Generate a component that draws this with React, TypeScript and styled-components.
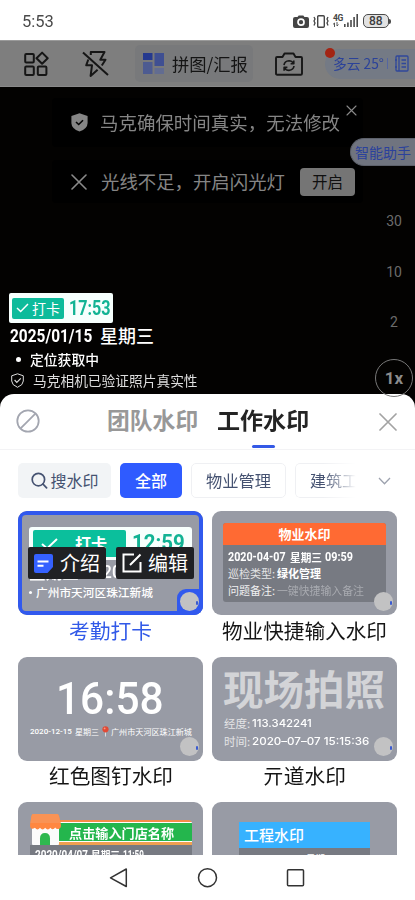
import React, { useLayoutEffect, useRef, useState } from 'react';
import styled, { createGlobalStyle, css } from 'styled-components';

const sans = '"Noto Sans CJK SC", sans-serif';
const roboto = 'Roboto, "Noto Sans CJK SC", sans-serif';
const inter = 'Inter, "Noto Sans CJK SC", sans-serif';

const GlobalStyle = createGlobalStyle`
  * { box-sizing: border-box; }
  body { margin: 0; background: #fff; font-family: ${sans}; overflow: hidden; }
  svg { display: block; flex: none; }
`;

/* ---------- text fitted to a given width ---------- */

const FitBox = styled.span<{ $w: number; $ml: number }>`
  display: block;
  flex: none;
  width: ${(p) => p.$w}px;
  margin-left: ${(p) => p.$ml}px;
  font-size: 0;
  line-height: 0;
`;

const FitInner = styled.span<{ $size: number; $color: string; $weight: number; $font: string }>`
  display: inline-block;
  vertical-align: top;
  white-space: nowrap;
  transform-origin: 0 50%;
  font: ${(p) => p.$weight} ${(p) => p.$size}px/1.2 ${(p) => p.$font};
  color: ${(p) => p.$color};
`;

type FitProps = {
  w: number;
  size: number;
  color?: string;
  weight?: number;
  font?: string;
  ml?: number;
  children: React.ReactNode;
};

function Fit({ w, size, color = '#fff', weight = 400, font = sans, ml = 0, children }: FitProps) {
  const ref = useRef<HTMLSpanElement>(null);
  const [scale, setScale] = useState(1);
  useLayoutEffect(() => {
    if (ref.current) setScale(w / ref.current.offsetWidth);
  }, [w]);
  return (
    <FitBox $w={w} $ml={ml}>
      <FitInner
        ref={ref}
        $size={size}
        $color={color}
        $weight={weight}
        $font={font}
        style={{ transform: `scaleX(${scale})` }}
      >
        {children}
      </FitInner>
    </FitBox>
  );
}

const Line = styled.div<{ $h: number; $mt?: number; $pl?: number }>`
  display: flex;
  align-items: center;
  flex: none;
  height: ${(p) => p.$h}px;
  margin-top: ${(p) => p.$mt ?? 0}px;
  padding-left: ${(p) => p.$pl ?? 0}px;
`;

/* ---------- screen ---------- */

const Screen = styled.div`
  display: flex;
  flex-direction: column;
  width: 415px;
  height: 900px;
  background: #030201;
  overflow: hidden;
`;

const StatusBar = styled.header`
  display: flex;
  align-items: center;
  height: 40px;
  flex: none;
  padding: 2px 24px 0 22px;
  background: #fff;
`;

const StatusIcons = styled.div`
  display: flex;
  align-items: center;
  margin-left: auto;
`;

const Battery = styled.div`
  display: flex;
  align-items: center;
  margin-left: 4px;
`;

const BatteryBody = styled.div`
  display: flex;
  align-items: center;
  justify-content: center;
  width: 26px;
  height: 14px;
  border: 1.3px solid #4a4a4a;
  border-radius: 5px;
  background: #e2e2e2;
`;

const BatteryTip = styled.div`
  width: 2px;
  height: 5px;
  border-radius: 0 2px 2px 0;
  background: #4a4a4a;
`;

const Toolbar = styled.nav`
  display: flex;
  align-items: center;
  height: 47px;
  flex: none;
  padding: 0 0 0 24px;
  background: #7e7e7e;
  border-top: 1px solid #9a9a9a;
  border-bottom: 1px solid #8a8a8a;
`;

const PuzzleButton = styled.div`
  display: flex;
  align-items: center;
  width: 118px;
  height: 37px;
  margin-left: 26px;
  padding-left: 8px;
  border-radius: 5px;
  background: #78797b;
`;

const WeatherPill = styled.div`
  position: relative;
  display: flex;
  align-items: center;
  width: 90px;
  height: 30px;
  margin-left: 22px;
  padding-left: 8px;
  border-radius: 15px 0 0 15px;
  background: #747a85;
`;

const RedDot = styled.i`
  position: absolute;
  left: 0;
  top: -1px;
  width: 10px;
  height: 10px;
  border-radius: 50%;
  background: #a32413;
`;

const Divider = styled.i`
  width: 1px;
  height: 11px;
  margin: 0 7px 0 3px;
  background: #5566a0;
`;

const Camera = styled.main`
  position: relative;
  display: flex;
  flex-direction: column;
  height: 307px;
  flex: none;
`;

const Notice = styled.div<{ $h: number; $mt: number }>`
  display: flex;
  align-items: center;
  width: 311px;
  height: ${(p) => p.$h}px;
  margin: ${(p) => p.$mt}px 0 0 52px;
  padding-left: 19px;
  border-radius: 4px;
  background: #000;
`;

const NoticeClose = styled.div`
  align-self: flex-start;
  margin: 7px 0 0 6px;
`;

const TurnOn = styled.button`
  display: flex;
  align-items: center;
  justify-content: center;
  width: 55px;
  height: 28px;
  margin-left: 15px;
  padding: 0;
  border: 0;
  border-radius: 4px;
  background: #757575;
`;

const Assistant = styled.div`
  position: absolute;
  right: 0;
  top: 51px;
  display: flex;
  align-items: center;
  width: 65px;
  height: 28px;
  padding-left: 4px;
  border-radius: 14px 0 0 14px;
  background: #70747f;
  border: 1px solid #5d616b;
  border-right: 0;
`;

const ZoomRail = styled.div`
  position: absolute;
  right: 0;
  top: 109px;
  display: flex;
  flex-direction: column;
  align-items: center;
  width: 42px;
`;

const ZoomStep = styled.div`
  height: 50.5px;
  font: 14px/50.5px ${roboto};
  color: #6b6b6b;
`;

const ZoomCurrent = styled.div`
  flex: none;
  width: 38px;
  height: 38px;
  margin-top: 11px;
  border: 1px solid #777;
  border-radius: 50%;
  text-align: center;
  font: 700 17px/37px ${roboto};
  color: #8b8b8b;
`;

const Stamp = styled.section`
  position: absolute;
  left: 9px;
  top: 206px;
  display: flex;
  flex-direction: column;
`;

const ClockBox = styled.div`
  display: flex;
  align-items: center;
  width: 104px;
  height: 30px;
  padding-left: 3px;
  border-radius: 2px;
  background: #f6fffd;
`;

const PunchBadge = styled.div`
  display: flex;
  align-items: center;
  width: 52px;
  height: 21px;
  padding-left: 4px;
  border-radius: 2px;
  background: #0dbb9b;
`;

const Dot = styled.i<{ $size: number }>`
  flex: none;
  width: ${(p) => p.$size}px;
  height: ${(p) => p.$size}px;
  border-radius: 50%;
  background: #fff;
`;

/* ---------- sheet ---------- */

const Sheet = styled.section`
  display: flex;
  flex-direction: column;
  height: 461px;
  flex: none;
  border-radius: 14px 14px 0 0;
  background: #fff;
  overflow: hidden;
`;

const SheetHeader = styled.div`
  display: flex;
  height: 56px;
  flex: none;
  padding: 0 18px 0 16px;
  border-bottom: 1px solid #f3f3f5;
`;

const Tab = styled.div<{ $ml: number }>`
  display: flex;
  flex-direction: column;
  align-items: center;
  margin-left: ${(p) => p.$ml}px;
`;

const TabMark = styled.i`
  width: 23px;
  height: 3px;
  margin-top: 11px;
  border-radius: 2px;
  background: #3459e6;
`;

const HeaderIcon = styled.div<{ $mt: number; $ml?: string }>`
  margin: ${(p) => p.$mt}px 0 0 ${(p) => p.$ml ?? '0'};
`;

const Chips = styled.div`
  display: flex;
  height: 35px;
  flex: none;
  margin: 13px 0 0 18px;
`;

const Chip = styled.div<{ $w: number; $kind: 'search' | 'active' | 'plain' | 'cut' }>`
  display: flex;
  align-items: center;
  justify-content: center;
  width: ${(p) => p.$w}px;
  margin-right: 9px;
  border-radius: 5px;
  ${(p) => p.$kind === 'search' && css`background: #f2f4f6;`}
  ${(p) => p.$kind === 'active' && css`background: #2f5bff;`}
  ${(p) => p.$kind === 'plain' && css`border: 1px solid #eff0f3;`}
  ${(p) =>
    p.$kind === 'cut' &&
    css`
      justify-content: flex-start;
      padding-left: 14px;
      border: 1px solid #eff0f3;
      border-right: 0;
      border-radius: 5px 0 0 5px;
      mask-image: linear-gradient(to right, #000 45%, transparent 98%);
    `}
`;

const ChevronBox = styled.div`
  align-self: center;
  margin-left: 12px;
`;

const Grid = styled.div`
  display: grid;
  grid-template-columns: 185px 185px;
  grid-auto-rows: 145.5px;
  column-gap: 9px;
  margin: 13px 0 0 18px;
`;

const Item = styled.article`
  display: flex;
  flex-direction: column;
  align-items: center;
`;

const Card = styled.div<{ $selected?: boolean }>`
  position: relative;
  display: flex;
  flex-direction: column;
  width: 185px;
  height: 104px;
  flex: none;
  border-radius: 9px;
  background: #989ba5;
  overflow: hidden;
  ${(p) =>
    p.$selected &&
    css`
      &::after {
        content: '';
        position: absolute;
        inset: 0;
        border: 4px solid #3159ee;
        border-radius: 8px 8px 3px 8px;
      }
    `}
`;

const CardLabel = styled.div`
  display: flex;
  align-items: center;
  height: 28px;
  margin-top: 1px;
`;

const Corner = styled.div<{ $on?: boolean }>`
  position: absolute;
  right: 0;
  bottom: 0;
  z-index: 1;
  width: 26px;
  height: 26px;
  padding: 2.5px;
  border-radius: 9px 0 3px 0;
  background: ${(p) => (p.$on ? '#3159ee' : 'transparent')};
`;

const Knob = styled.div`
  display: flex;
  align-items: center;
  justify-content: flex-end;
  width: 19px;
  height: 19px;
  padding: 3px 1px 0 0;
  border-radius: 50%;
  background: #c2c2c3;

  &::after {
    content: '';
    width: 2px;
    height: 4px;
    border-radius: 1px;
    background: #3b5bd0;
  }
`;

const PunchBox = styled.div`
  display: flex;
  align-items: center;
  width: 163px;
  height: 33px;
  margin: 16px 0 0 11px;
  padding-left: 4px;
  border-radius: 3px;
  background: #f8fffd;
`;

const PunchGreen = styled.div`
  display: flex;
  align-items: center;
  width: 93px;
  height: 27px;
  padding-left: 8px;
  border-radius: 2px;
  background: #0bbf9c;
`;

const HoverActions = styled.div`
  position: absolute;
  left: 10px;
  top: 36px;
  z-index: 2;
  display: flex;
  gap: 10px;
`;

const Action = styled.div`
  display: flex;
  align-items: center;
  width: 78px;
  height: 32px;
  padding-left: 6px;
  border-radius: 2px;
  background: #202124;
`;

const PropertyPanel = styled.div`
  display: flex;
  flex-direction: column;
  width: 163px;
  height: 79px;
  margin: 12px 0 0 11px;
  border-radius: 3px;
  background: #777a82;
  overflow: hidden;
`;

const OrangeHead = styled.div`
  display: flex;
  align-items: center;
  justify-content: center;
  height: 22px;
  flex: none;
  background: #ff6a33;
`;

const StorePanel = styled.div`
  display: flex;
  flex-direction: column;
  width: 162px;
  height: 90px;
  margin: 18px 0 0 12px;
  background: linear-gradient(#777a82, #777a82) no-repeat 0 25px;
`;

const StoreBanner = styled.div`
  display: flex;
  align-items: center;
  height: 25px;
  flex: none;
  margin-left: 10px;
  padding-left: 29px;
  border-radius: 0 4px 0 0;
  background: linear-gradient(
    #f58b4a 0 2px, #fff 2px 3px, #24b64d 3px 21px, #fff 21px 22px, #f0a050 22px 25px
  );
`;

const StoreIcon = styled.div`
  position: absolute;
  left: 11px;
  top: 11px;
`;

const ProjectPanel = styled.div`
  width: 131px;
  height: 80px;
  margin: 20px 0 0 27px;
  background: #777a82;
`;

const BlueHead = styled.div`
  display: flex;
  align-items: center;
  height: 26px;
  padding-left: 5px;
  background: #37b2ff;
`;

const SystemNav = styled.footer`
  display: flex;
  height: 45px;
  flex: none;
  padding: 12px 0 0 109px;
  background: #fff;
`;

const NavSlot = styled.div<{ $mr: number }>`
  margin-right: ${(p) => p.$mr}px;
`;

/* ---------- icons ---------- */

const CrossIcon = ({ s, color, w }: { s: number; color: string; w: number }) => (
  <svg width={s} height={s} viewBox={`0 0 ${s} ${s}`} stroke={color} strokeWidth={w} strokeLinecap="round">
    <path d={`M1 1L${s - 1} ${s - 1}M${s - 1} 1L1 ${s - 1}`} />
  </svg>
);

const CheckIcon = ({ w, h, sw }: { w: number; h: number; sw: number }) => (
  <svg width={w} height={h} viewBox={`0 0 ${w} ${h}`} fill="none" stroke="#fff" strokeWidth={sw}>
    <path d={`M1 ${h * 0.5}L${w * 0.36} ${h - 1.5}L${w - 1} 1`} />
  </svg>
);

const AppsIcon = () => (
  <svg width="25" height="26" viewBox="0 0 25 26" fill="none" stroke="#161616" strokeWidth="2">
    <rect x="1.2" y="3" width="8.6" height="8.6" rx="1" />
    <rect x="1.2" y="15.4" width="8.6" height="8.6" rx="1" />
    <rect x="13.8" y="15.4" width="8.6" height="8.6" rx="1" />
    <path d="M18.1 1.6L23.7 7.2L18.1 12.8L12.5 7.2Z" strokeLinejoin="round" />
  </svg>
);

const FlashOffIcon = () => (
  <svg width="27" height="28" viewBox="0 0 27 28" fill="none" stroke="#161616" strokeWidth="2" strokeLinejoin="round">
    <path d="M8.8 5V2H22.5L18.3 9.8H23.5L19.8 15.5M6.3 9.5L4.2 15.3H10L8.6 26L15.6 19.8" />
    <path d="M1 2.5L26 25" />
  </svg>
);

const MosaicIcon = () => (
  <svg width="21" height="21" viewBox="0 0 21 21">
    <rect width="9.5" height="7" fill="#25398f" />
    <rect y="9" width="9.5" height="12" fill="#4d5b91" />
    <rect x="11.5" width="9.5" height="13" fill="#3f4f92" />
    <rect x="11.5" y="15" width="9.5" height="6" fill="#626c91" />
  </svg>
);

const FlipCameraIcon = () => (
  <svg width="28" height="24" viewBox="0 0 28 24" fill="none" stroke="#171717" strokeWidth="1.9" strokeLinejoin="round">
    <path d="M2 5H7.5L9.5 1.5H18.5L20.5 5H26Q27 5 27 6V21.5Q27 22.8 25.8 22.8H2.2Q1 22.8 1 21.5V6Q1 5 2 5Z" />
    <path d="M9 13.2Q9.5 9 14 8.8Q17 8.8 18.4 11.4M18.8 8.5V11.8H15.6M19 14Q18.5 18 14 18.4Q11 18.4 9.5 15.8M9.1 18.8V15.4H12.4" strokeWidth="1.6" />
  </svg>
);

const NotebookIcon = () => (
  <svg width="14" height="17" viewBox="0 0 14 17" fill="none" stroke="#2f479b" strokeWidth="1.3">
    <rect x="1" y="1" width="12" height="15" rx="1" />
    <path d="M4 1V16M6.5 5H11M6.5 8.5H11M6.5 12H11M0 5H2M0 12H2" />
  </svg>
);

const StatusCamera = () => (
  <svg width="16" height="13" viewBox="0 0 16 13">
    <path d="M2 2H4.5L5.7.4H10.3L11.5 2H14Q16 2 16 4V11Q16 13 14 13H2Q0 13 0 11V4Q0 2 2 2Z" fill="#454545" />
    <circle cx="8" cy="7.2" r="3" fill="none" stroke="#fff" strokeWidth="1.7" />
  </svg>
);

const VibrateIcon = () => (
  <svg width="16" height="13" viewBox="0 0 16 13" fill="none" stroke="#454545">
    <rect x="4.7" y=".7" width="6.6" height="11.6" rx="1" strokeWidth="1.4" />
    <path d="M1 2L2 4L1 6L2 8L1 10.5M15 2L14 4L15 6L14 8L15 10.5" strokeWidth="1.3" />
  </svg>
);

const SignalLabel = styled.div`
  display: flex;
  flex-direction: column;
  width: 11px;
  margin: -1px 0 0 4px;
  font: 700 8.5px/8px ${roboto};
  letter-spacing: -0.4px;
  color: #454545;
`;

const SignalBars = () => (
  <svg width="15" height="14" viewBox="0 0 15 14" fill="#4b4b4b">
    <path d="M0 10H1.6V13H0ZM3.1 8.5H4.7V13H3.1ZM6.2 6H7.8V13H6.2ZM9.3 3H10.9V13H9.3ZM12.4 0H14V13H12.4Z" />
  </svg>
);

const ArrowPair = () => (
  <svg width="6" height="5" viewBox="0 0 6 5" stroke="#454545" fill="none">
    <path d="M1.5 5V1L0 2.4M4 0V4L5.5 2.6" strokeWidth=".9" />
  </svg>
);

const ShieldSolid = () => (
  <svg width="17" height="19" viewBox="0 0 17 19">
    <path d="M8.5.3L16.6 3V10Q16.6 15.5 8.5 18.6Q.4 15.5.4 10V3Z" fill="#858585" />
    <path d="M5 9L7.7 11.5L12 7.3" fill="none" stroke="#050505" strokeWidth="1.6" />
  </svg>
);

const ShieldOutline = () => (
  <svg width="13" height="15" viewBox="0 0 13 15" fill="none" stroke="#ddd">
    <path d="M6.5.8L12.3 2.8V8Q12.3 12 6.5 14.3Q.7 12 .7 8V2.8Z" />
    <path d="M3.6 7L5.8 9.3L9.8 5.3" strokeWidth="1.2" />
  </svg>
);

const BanIcon = () => (
  <svg width="24" height="24" viewBox="0 0 24 24" fill="none" stroke="#a3a6b0" strokeWidth="1.8">
    <circle cx="12" cy="12" r="10.7" />
    <path d="M4.6 19.4L19.4 4.6" />
  </svg>
);

const SearchIcon = () => (
  <svg width="17" height="17" viewBox="0 0 17 17" fill="none" stroke="#455271" strokeWidth="1.7" strokeLinecap="round">
    <circle cx="7.4" cy="7.6" r="6.2" />
    <path d="M12 12.2L15.6 15.8" />
  </svg>
);

const ChevronIcon = () => (
  <svg width="13" height="8" viewBox="0 0 13 8" fill="none" stroke="#9da2ae" strokeWidth="1.3">
    <path d="M1 1L6.5 6.7L12 1" />
  </svg>
);

const IntroIcon = () => (
  <svg width="19" height="19" viewBox="0 0 19 19">
    <path d="M2 0H17Q19 0 19 2V13L13.5 19H2Q0 19 0 17V2Q0 0 2 0Z" fill="#3561ff" />
    <path d="M3.5 7.5H14.5M3.5 11.8H9.5" stroke="#fff" strokeWidth="2" />
  </svg>
);

const EditIcon = () => (
  <svg width="20" height="20" viewBox="0 0 20 20" fill="none" stroke="#fff" strokeWidth="2">
    <path d="M12 1.5H1.5V18.5H18.5V9M8 12L18.5 1.5" />
  </svg>
);

const PinIcon = () => (
  <svg width="7" height="11" viewBox="0 0 7 11">
    <path d="M3.5 6V10.5" stroke="#dcdde1" strokeWidth="1" />
    <circle cx="3.5" cy="3.3" r="3.1" fill="#e14a35" />
    <circle cx="2.6" cy="2.4" r=".9" fill="#f69a86" />
  </svg>
);

const ShopIcon = () => (
  <svg width="33" height="33" viewBox="0 0 33 33">
    <path d="M3 13H30V31Q30 32 29 32H4Q3 32 3 31Z" fill="#fbfbfb" />
    <path d="M11 32V25.5Q11 20 16 20Q21 20 21 25.5V32Z" fill="#2eb84f" />
    <path d="M4 1H28Q29.5 1 30 3L32 12Q32 16 29 16Q27 16 26.2 14.5Q24 18 21.4 14.8Q18.8 18 16.2 14.8Q13.6 18 11 14.8Q8.4 18 6 14.8Q1 17.5 1 12L2.5 3Q3 1 4 1Z" fill="#ff8740" />
    <path d="M4 1H28Q29.5 1 30 3L31.5 10H1.4L2.5 3Q3 1 4 1Z" fill="#f99355" />
  </svg>
);

/* ---------- page ---------- */

function Marker({ on }: { on?: boolean }) {
  return (
    <Corner $on={on}>
      <Knob />
    </Corner>
  );
}

function Entry({ label, w, selected, children }: { label?: string; w?: number; selected?: boolean; children: React.ReactNode }) {
  return (
    <Item>
      <Card $selected={selected}>
        {children}
        <Marker on={selected} />
      </Card>
      {label && (
        <CardLabel>
          <Fit w={w ?? 83} size={20.5} color={selected ? '#3159e8' : '#151515'}>{label}</Fit>
        </CardLabel>
      )}
    </Item>
  );
}

const teal = '#12b394';

export default function App() {
  return (
    <Screen>
      <GlobalStyle />
      <StatusBar>
        <Fit w={32} size={17} color="#4a4a4a" font={roboto}>5:53</Fit>
        <StatusIcons>
          <StatusCamera />
          <Line $h={14} $pl={4}><VibrateIcon /></Line>
          <SignalLabel>4G<ArrowPair /></SignalLabel>
          <SignalBars />
          <Battery>
            <BatteryBody>
              <Fit w={14} size={12} color="#3c3c3c" weight={500} font={roboto}>88</Fit>
            </BatteryBody>
            <BatteryTip />
          </Battery>
        </StatusIcons>
      </StatusBar>

      <Toolbar>
        <AppsIcon />
        <Line $h={28} $pl={33}><FlashOffIcon /></Line>
        <PuzzleButton>
          <MosaicIcon />
          <Fit w={76} size={17.5} color="#141414" ml={8}>拼图/汇报</Fit>
        </PuzzleButton>
        <Line $h={28} $pl={22}><FlipCameraIcon /></Line>
        <WeatherPill>
          <RedDot />
          <Fit w={51} size={14} color="#2b4299">多云 25°</Fit>
          <Divider />
          <NotebookIcon />
        </WeatherPill>
      </Toolbar>

      <Camera>
        <Notice $h={49} $mt={11}>
          <ShieldSolid />
          <Fit w={240} size={18.4} color="#858585" ml={12}>马克确保时间真实，无法修改</Fit>
          <NoticeClose><CrossIcon s={11} color="#8a8a8a" w={1.1} /></NoticeClose>
        </Notice>
        <Notice $h={43} $mt={13}>
          <CrossIcon s={16} color="#8a8a8a" w={1.6} />
          <Fit w={184} size={18.4} color="#858585" ml={14}>光线不足，开启闪光灯</Fit>
          <TurnOn><Fit w={31} size={15.5} color="#101010">开启</Fit></TurnOn>
        </Notice>
        <Assistant><Fit w={56} size={14} color="#2a419c">智能助手</Fit></Assistant>
        <ZoomRail>
          <ZoomStep>30</ZoomStep>
          <ZoomStep>10</ZoomStep>
          <ZoomStep>2</ZoomStep>
          <ZoomCurrent>1x</ZoomCurrent>
        </ZoomRail>
        <Stamp>
          <ClockBox>
            <PunchBadge>
              <CheckIcon w={13} h={10} sw={1.5} />
              <Fit w={28} size={14} ml={3}>打卡</Fit>
            </PunchBadge>
            <Fit w={42} size={20} color={teal} weight={700} font={roboto} ml={5}>17:53</Fit>
          </ClockBox>
          <Line $h={24} $mt={1}>
            <Fit w={82} size={19} weight={700} font={roboto} ml={1}>2025/01/15</Fit>
            <Fit w={54} size={18} weight={500} ml={8}>星期三</Fit>
          </Line>
          <Line $h={22} $pl={7}>
            <Dot $size={5} />
            <Fit w={69} size={14} weight={500} ml={9}>定位获取中</Fit>
          </Line>
          <Line $h={21} $pl={2}>
            <ShieldOutline />
            <Fit w={165} size={13.8} color="#dedede" ml={9}>马克相机已验证照片真实性</Fit>
          </Line>
        </Stamp>
      </Camera>

      <Sheet>
        <SheetHeader>
          <HeaderIcon $mt={15}><BanIcon /></HeaderIcon>
          <Tab $ml={67}>
            <Line $h={28} $mt={12}><Fit w={91} size={22.8} color="#989898" weight={700}>团队水印</Fit></Line>
          </Tab>
          <Tab $ml={19}>
            <Line $h={28} $mt={12}><Fit w={92} size={22.8} color="#242424" weight={700}>工作水印</Fit></Line>
            <TabMark />
          </Tab>
          <HeaderIcon $mt={19} $ml="auto"><CrossIcon s={18} color="#a3a3a3" w={1.7} /></HeaderIcon>
        </SheetHeader>

        <Chips>
          <Chip $w={93} $kind="search"><SearchIcon /><Fit w={48} size={16} color="#455271" ml={3}>搜水印</Fit></Chip>
          <Chip $w={62} $kind="active"><Fit w={32} size={16} weight={500}>全部</Fit></Chip>
          <Chip $w={95} $kind="plain"><Fit w={65} size={16} color="#455271">物业管理</Fit></Chip>
          <Chip $w={62} $kind="cut"><Fit w={48} size={16} color="#455271">建筑工</Fit></Chip>
          <ChevronBox><ChevronIcon /></ChevronBox>
        </Chips>

        <Grid>
          <Entry label="考勤打卡" w={83} selected>
            <PunchBox>
              <PunchGreen>
                <CheckIcon w={17} h={12} sw={2} />
                <Fit w={32} size={16} weight={700} ml={17}>打卡</Fit>
              </PunchGreen>
              <Fit w={53} size={22} color={teal} weight={700} font={roboto} ml={6}>12:59</Fit>
            </PunchBox>
            <Line $h={22} $mt={1} $pl={11}>
              <Fit w={50} size={17} weight={500}>星期三</Fit>
              <Fit w={37} size={19} weight={500} font={roboto} ml={5}>2020</Fit>
            </Line>
            <Line $h={18} $pl={11}>
              <Dot $size={3} />
              <Fit w={117} size={11.7} weight={500} ml={4}>广州市天河区珠江新城</Fit>
            </Line>
            <HoverActions>
              <Action><IntroIcon /><Fit w={40} size={20} ml={7}>介绍</Fit></Action>
              <Action><EditIcon /><Fit w={40} size={20} ml={6}>编辑</Fit></Action>
            </HoverActions>
          </Entry>

          <Entry label="物业快捷输入水印" w={165}>
            <PropertyPanel>
              <OrangeHead><Fit w={52} size={13} weight={700}>物业水印</Fit></OrangeHead>
              <Line $h={17} $mt={4} $pl={5}>
                <Fit w={58} size={12} weight={700} font={roboto}>2020-04-07</Fit>
                <Fit w={32} size={11} weight={700} ml={4}>星期三</Fit>
                <Fit w={28} size={12} weight={700} font={roboto} ml={3}>09:59</Fit>
              </Line>
              <Line $h={16} $pl={5}>
                <Fit w={47} size={11} color="#e4e4e6">巡检类型:</Fit>
                <Fit w={44} size={11} weight={700} ml={2}>绿化管理</Fit>
              </Line>
              <Line $h={17} $pl={5}>
                <Fit w={47} size={11} color="#f0f0f1">问题备注:</Fit>
                <Fit w={87} size={11} color="#a8aab0" ml={2}>一键快捷输入备注</Fit>
              </Line>
            </PropertyPanel>
          </Entry>

          <Entry label="红色图钉水印" w={124}>
            <Line $h={52} $mt={17} $pl={38}>
              <Fit w={108} size={44} weight={500} font={roboto}>16:58</Fit>
            </Line>
            <Line $h={12} $pl={12}>
              <Fit w={42} size={8} weight={500} font={roboto}>2020-12-15</Fit>
              <Fit w={24} size={8} ml={3}>星期三</Fit>
              <Line $h={11} $pl={3}><PinIcon /></Line>
              <Fit w={81} size={8.1} ml={2}>广州市天河区珠江新城</Fit>
            </Line>
          </Entry>

          <Entry label="亓道水印" w={83}>
            <Line $h={42} $mt={11} $pl={11}>
              <Fit w={162} size={40.5} color="#d3d4d7" weight={700}>现场拍照</Fit>
            </Line>
            <Line $h={18} $mt={5} $pl={12}>
              <Fit w={26} size={11.5} color="#e4e4e6">经度:</Fit>
              <Fit w={60} size={11} weight={500} font={inter} ml={1.5}>113.342241</Fit>
            </Line>
            <Line $h={18} $pl={12}>
              <Fit w={26} size={11.5} color="#e4e4e6">时间:</Fit>
              <Fit w={117} size={11} weight={500} font={inter} ml={1.5}>2020–07–07 15:15:36</Fit>
            </Line>
          </Entry>

          <Entry>
            <StorePanel>
              <StoreBanner><Fit w={105} size={13} weight={700}>点击输入门店名称</Fit></StoreBanner>
              <Line $h={20} $pl={5}>
                <Fit w={53} size={12} weight={700} font={roboto}>2020/04/07</Fit>
                <Fit w={29} size={10} weight={700} ml={3}>星期三</Fit>
                <Fit w={21} size={12} weight={700} font={roboto} ml={3}>11:59</Fit>
              </Line>
            </StorePanel>
            <StoreIcon><ShopIcon /></StoreIcon>
          </Entry>

          <Entry>
            <ProjectPanel>
              <BlueHead><Fit w={60} size={15} weight={500}>工程水印</Fit></BlueHead>
              <Line $h={20} $mt={1} $pl={67}>
                <Fit w={29} size={9.5} weight={500}>星期三</Fit>
              </Line>
            </ProjectPanel>
          </Entry>
        </Grid>
      </Sheet>

      <SystemNav>
        <NavSlot $mr={69}>
          <svg width="19" height="22" viewBox="0 0 19 22" fill="none" stroke="#333" strokeWidth="1.5" strokeLinejoin="round">
            <path d="M17.3 2V19.5L1.5 10.8Z" />
          </svg>
        </NavSlot>
        <NavSlot $mr={68}>
          <svg width="21" height="22" viewBox="0 0 21 22" fill="none" stroke="#333" strokeWidth="1.5">
            <circle cx="10.5" cy="10.7" r="9" />
          </svg>
        </NavSlot>
        <NavSlot $mr={0}>
          <svg width="19" height="22" viewBox="0 0 19 22" fill="none" stroke="#333" strokeWidth="1.5">
            <rect x="1.5" y="2.7" width="16" height="16" rx="1" />
          </svg>
        </NavSlot>
      </SystemNav>
    </Screen>
  );
}
